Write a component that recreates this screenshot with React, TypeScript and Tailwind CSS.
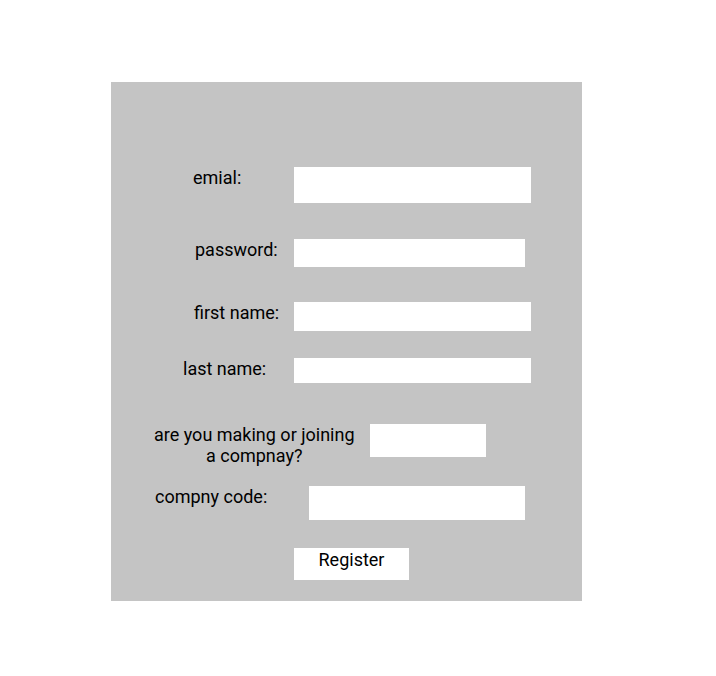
export default function App() {
  return (
    <div className="min-h-screen bg-white font-[Roboto,sans-serif] text-[18px] leading-[21px] text-black">
      <div className="pt-[82px] pl-[111px]">
        <form className="flex h-[519px] w-[471px] flex-col bg-[#c4c4c4]">
          <div className="mt-[85px] flex items-start">
            <label className="w-[183px] pl-[82px]">emial:</label>
            <input className="h-[36px] w-[237px] bg-white outline-none" />
          </div>

          <div className="mt-[36px] flex items-start">
            <label className="w-[183px] pl-[84px]">password:</label>
            <input type="password" className="h-[28px] w-[231px] bg-white outline-none" />
          </div>

          <div className="mt-[35px] flex items-start">
            <label className="w-[183px] pl-[83px]">first name:</label>
            <input className="h-[29px] w-[237px] bg-white outline-none" />
          </div>

          <div className="mt-[27px] flex items-start">
            <label className="w-[183px] pl-[72px]">last name:</label>
            <input className="h-[25px] w-[237px] bg-white outline-none" />
          </div>

          <div className="mt-[41px] flex items-start">
            <label className="ml-[43px] text-center">
              are you making or joining
              <br />
              a compnay?
            </label>
            <input className="ml-[15px] h-[33px] w-[116px] bg-white outline-none" />
          </div>

          <div className="mt-[20px] flex items-start">
            <label className="w-[198px] pl-[44px]">compny code:</label>
            <input className="h-[34px] w-[216px] bg-white outline-none" />
          </div>

          <div className="mt-[28px] flex">
            <button
              type="button"
              className="ml-[183px] flex h-[32px] w-[115px] items-start justify-center bg-white pt-px leading-[21px]"
            >
              Register
            </button>
          </div>
        </form>
      </div>
    </div>
  );
}
